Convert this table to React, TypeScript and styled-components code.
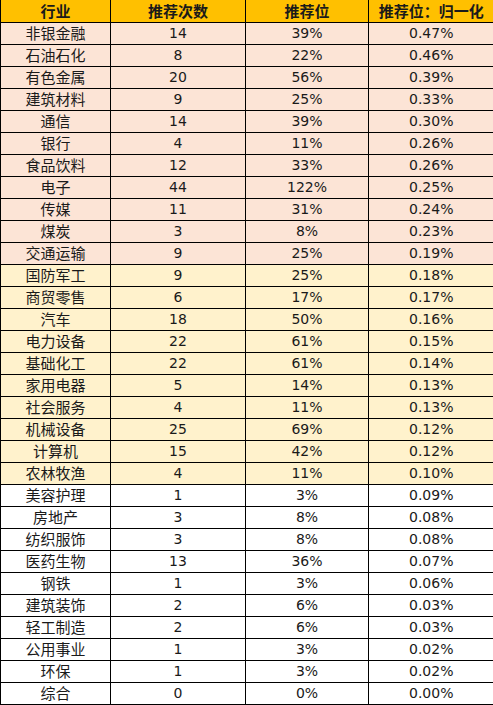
import React from "react";
import styled, { createGlobalStyle } from "styled-components";

type Tone = "pink" | "yellow" | "white";

const GlobalStyle = createGlobalStyle`
  html, body {
    margin: 0;
    padding: 0;
    background: #ffffff;
  }
  body {
    font-family: "DejaVu Sans", "Noto Sans CJK SC", sans-serif;
    color: #1a1a1a;
  }
`;

const rows: [string, number, string, string][] = [
  ["非银金融", 14, "39%", "0.47%"],
  ["石油石化", 8, "22%", "0.46%"],
  ["有色金属", 20, "56%", "0.39%"],
  ["建筑材料", 9, "25%", "0.33%"],
  ["通信", 14, "39%", "0.30%"],
  ["银行", 4, "11%", "0.26%"],
  ["食品饮料", 12, "33%", "0.26%"],
  ["电子", 44, "122%", "0.25%"],
  ["传媒", 11, "31%", "0.24%"],
  ["煤炭", 3, "8%", "0.23%"],
  ["交通运输", 9, "25%", "0.19%"],
  ["国防军工", 9, "25%", "0.18%"],
  ["商贸零售", 6, "17%", "0.17%"],
  ["汽车", 18, "50%", "0.16%"],
  ["电力设备", 22, "61%", "0.15%"],
  ["基础化工", 22, "61%", "0.14%"],
  ["家用电器", 5, "14%", "0.13%"],
  ["社会服务", 4, "11%", "0.13%"],
  ["机械设备", 25, "69%", "0.12%"],
  ["计算机", 15, "42%", "0.12%"],
  ["农林牧渔", 4, "11%", "0.10%"],
  ["美容护理", 1, "3%", "0.09%"],
  ["房地产", 3, "8%", "0.08%"],
  ["纺织服饰", 3, "8%", "0.08%"],
  ["医药生物", 13, "36%", "0.07%"],
  ["钢铁", 1, "3%", "0.06%"],
  ["建筑装饰", 2, "6%", "0.03%"],
  ["轻工制造", 2, "6%", "0.03%"],
  ["公用事业", 1, "3%", "0.02%"],
  ["环保", 1, "3%", "0.02%"],
  ["综合", 0, "0%", "0.00%"],
];

const toneOf = (i: number): Tone => (i < 11 ? "pink" : i < 21 ? "yellow" : "white");

const toneColor: Record<Tone, string> = {
  pink: "#fce4d6",
  yellow: "#fff2cc",
  white: "#ffffff",
};

export default function App() {
  return (
    <>
      <GlobalStyle />
      <Sheet>
        <colgroup>
          <col style={{ width: 110 }} />
          <col style={{ width: 135 }} />
          <col style={{ width: 123 }} />
          <col style={{ width: 125 }} />
        </colgroup>
        <thead>
          <HeadRow>
            <HeadCell>行业</HeadCell>
            <HeadCell>推荐次数</HeadCell>
            <HeadCell>推荐位</HeadCell>
            <HeadCell>推荐位：归一化</HeadCell>
          </HeadRow>
        </thead>
        <tbody>
          {rows.map(([name, count, pos, norm], i) => (
            <Row key={name} $tone={toneOf(i)}>
              <NameCell>{name}</NameCell>
              <NumCell>{count}</NumCell>
              <NumCell>{pos}</NumCell>
              <NumCell>{norm}</NumCell>
            </Row>
          ))}
        </tbody>
      </Sheet>
    </>
  );
}

const Sheet = styled.table`
  width: 493px;
  table-layout: fixed;
  border-collapse: collapse;
  border-spacing: 0;
`;

const HeadRow = styled.tr`
  background: #ffc000;
  height: 22px;
`;

const HeadCell = styled.th`
  padding: 0;
  height: 21px;
  border: 1px solid #000;
  border-top: none;
  font-family: "Noto Sans CJK SC", sans-serif;
  font-size: 15px;
  font-weight: 700;
  line-height: 20px;
  text-align: center;
  color: #1a1a1a;

  &:last-child {
    border-right: none;
  }
`;

const Row = styled.tr<{ $tone: Tone }>`
  background: ${(p) => toneColor[p.$tone]};
  height: 22px;
`;

const Cell = styled.td`
  padding: 0;
  height: 21px;
  border: 1px solid #000;
  text-align: center;
  line-height: 20px;

  &:last-child {
    border-right: none;
  }
`;

const NameCell = styled(Cell)`
  font-family: "Noto Sans CJK SC", sans-serif;
  font-size: 15px;
`;

const NumCell = styled(Cell)`
  font-family: "DejaVu Sans", sans-serif;
  font-size: 14px;
`;
